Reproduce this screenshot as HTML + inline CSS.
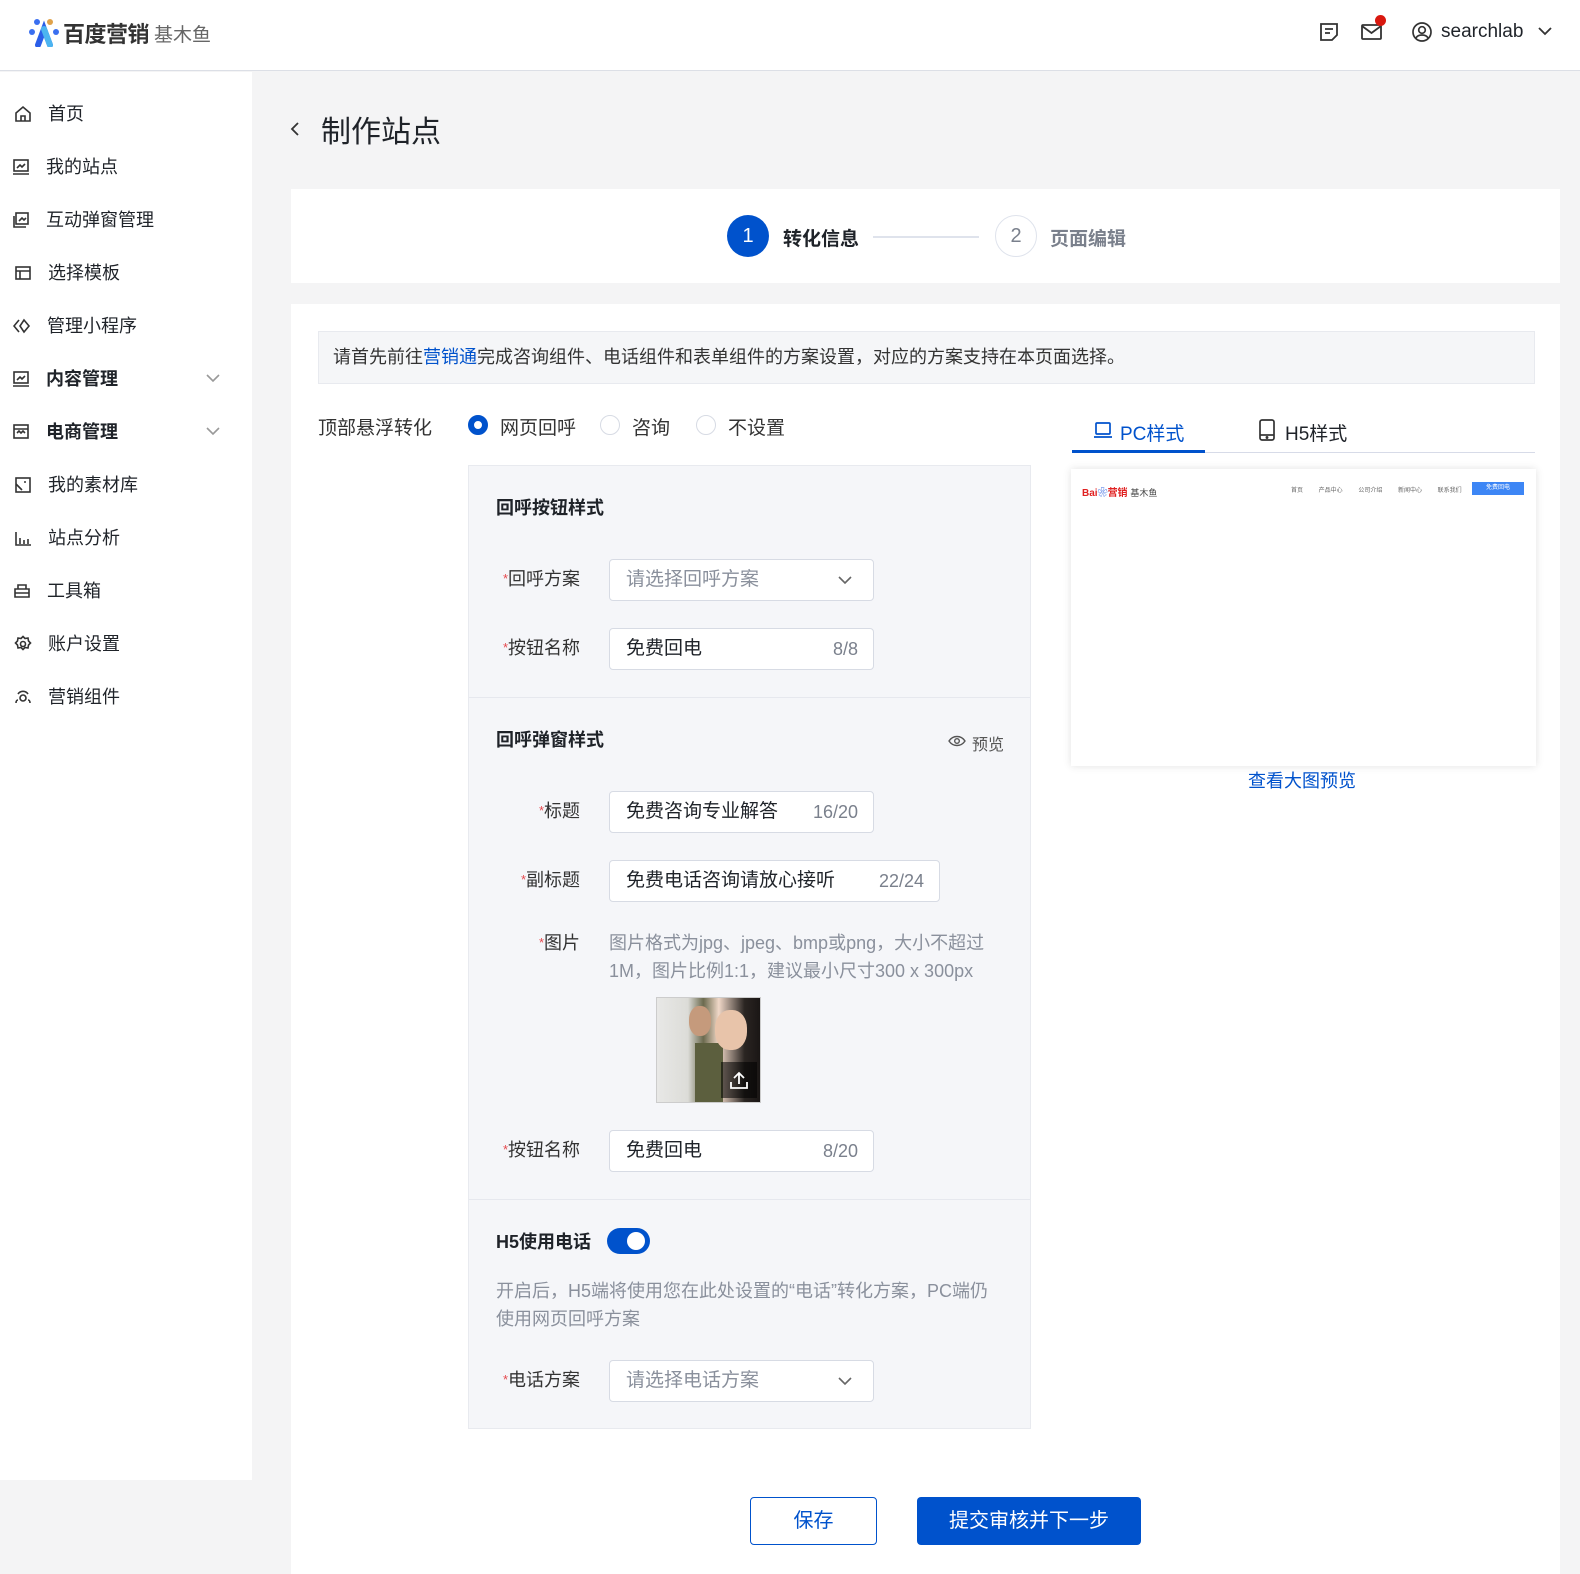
<!DOCTYPE html>
<html><head><meta charset="utf-8"><style>
*{margin:0;padding:0;box-sizing:border-box}
body{width:1580px;height:1570px;background:#f4f4f5;font-family:"Liberation Sans","Noto Sans CJK SC",sans-serif;color:#1f2329;position:relative;overflow:hidden}
.a{position:absolute}
.nav{font-size:18px;color:#1f2329;line-height:24px}
.nav svg{position:absolute;left:-34px;top:3px}
.lbl{font-size:18px;color:#333;line-height:24px;text-align:right}
.lbl i{color:#e5484d;font-style:normal;font-size:13px;vertical-align:top}
.inp{background:#fff;border:1px solid #d7dbe4;border-radius:4px;height:42px;font-size:19px;line-height:40px;padding:0 16px;color:#1f2329}
.inp .c{position:absolute;right:15px;top:0;color:#7a808c;font-size:18px}
.ph{color:#8a909c}
.h{font-size:18px;font-weight:bold;color:#1f2329}
</style></head><body>
<div class="a" style="left:0;top:0;width:1580px;height:71px;background:#fff;border-bottom:1px solid #dcdfe6"></div>
<svg class="a" style="left:28px;top:17px" width="32" height="30" viewBox="0 0 32 30">
<circle cx="9" cy="5" r="3" fill="#3a6ff0"/><circle cx="22" cy="5" r="3" fill="#e0a24a"/><circle cx="4" cy="15" r="3" fill="#3a6ff0"/><circle cx="28" cy="15" r="3" fill="#3a6ff0"/>
<path d="M10 28 L16 12 L22 28" stroke="#2b5ee8" stroke-width="6" fill="none" stroke-linecap="round"/>
<path d="M16 12 L22 28" stroke="#4cb4f0" stroke-width="6" stroke-linecap="round"/></svg>
<div class="a" style="left:63px;top:17px;font-size:22px;font-weight:bold;color:#333;letter-spacing:-0.5px">百度营销</div>
<div class="a" style="left:154px;top:20px;font-size:19px;color:#666">基木鱼</div>
<svg class="a" style="left:1318px;top:21px" width="22" height="22" viewBox="0 0 22 22" fill="none" stroke="#333" stroke-width="1.8"><path d="M3 3h16v11l-5 5H3z M7 8h8 M7 12h5"/></svg>
<svg class="a" style="left:1360px;top:22px" width="24" height="20" viewBox="0 0 24 20" fill="none" stroke="#333" stroke-width="1.8"><rect x="2" y="3" width="19" height="14" rx="1"/><path d="M2 4l9.5 7L21 4"/></svg>
<div class="a" style="left:1375px;top:15px;width:11px;height:11px;border-radius:50%;background:#d9180f"></div>
<svg class="a" style="left:1411px;top:21px" width="22" height="22" viewBox="0 0 22 22" fill="none" stroke="#333" stroke-width="1.7"><circle cx="11" cy="11" r="9"/><circle cx="11" cy="9" r="3.3"/><path d="M5 17c2-4 10-4 12 0"/></svg>
<div class="a" style="left:1441px;top:21px;font-size:19px;color:#1f2329">searchlab</div>
<svg class="a" style="left:1537px;top:25px" width="16" height="12" viewBox="0 0 16 12" fill="none" stroke="#333" stroke-width="1.8"><path d="M2 3l6 6 6-6"/></svg>
<div class="a" style="left:0;top:72px;width:252px;height:1408px;background:#fff"></div>
<div class="a nav" style="left:48px;top:102px"><svg width="18" height="18" viewBox="0 0 18 18" fill="none" stroke="#333" stroke-width="1.6"><path d="M2 8L9 2l7 6v8H2z M7 16v-5h4v5"/></svg>首页</div>
<div class="a nav" style="left:46px;top:155px"><svg width="18" height="18" viewBox="0 0 18 18" fill="none" stroke="#333" stroke-width="1.6"><rect x="2" y="2" width="14" height="11"/><path d="M1 16h16 M5 10l3-3 2 2 3-3"/></svg>我的站点</div>
<div class="a nav" style="left:46px;top:208px"><svg width="18" height="18" viewBox="0 0 18 18" fill="none" stroke="#333" stroke-width="1.6"><rect x="4" y="2" width="12" height="11"/><path d="M2 5v11h12 M7 10l3-3 2 2 2-2"/></svg>互动弹窗管理</div>
<div class="a nav" style="left:48px;top:261px"><svg width="18" height="18" viewBox="0 0 18 18" fill="none" stroke="#333" stroke-width="1.6"><rect x="2" y="3" width="14" height="12"/><path d="M2 7h14 M6 7v8"/></svg>选择模板</div>
<div class="a nav" style="left:47px;top:314px"><svg width="18" height="18" viewBox="0 0 18 18" fill="none" stroke="#333" stroke-width="1.6"><path d="M6 3L1 9l5 6 M11 3l5 6-5 6-4-6z"/></svg>管理小程序</div>
<div class="a nav" style="left:46px;top:367px;font-weight:bold"><svg width="18" height="18" viewBox="0 0 18 18" fill="none" stroke="#333" stroke-width="1.6"><rect x="2" y="2" width="14" height="11"/><path d="M1 16h16 M5 10l3-3 2 2 3-3"/></svg>内容管理</div>
<svg class="a" style="left:205px;top:372px" width="16" height="12" viewBox="0 0 16 12" fill="none" stroke="#999" stroke-width="1.6"><path d="M2 3l6 6 6-6"/></svg>
<div class="a nav" style="left:46px;top:420px;font-weight:bold"><svg width="18" height="18" viewBox="0 0 18 18" fill="none" stroke="#333" stroke-width="1.6"><rect x="2" y="2" width="14" height="13"/><path d="M2 6h14 M5 10l2-2 2 2 2-2 2 2"/></svg>电商管理</div>
<svg class="a" style="left:205px;top:425px" width="16" height="12" viewBox="0 0 16 12" fill="none" stroke="#999" stroke-width="1.6"><path d="M2 3l6 6 6-6"/></svg>
<div class="a nav" style="left:48px;top:473px"><svg width="18" height="18" viewBox="0 0 18 18" fill="none" stroke="#333" stroke-width="1.6"><rect x="2" y="2" width="14" height="14"/><path d="M2 8l6 6 M10 6h2"/></svg>我的素材库</div>
<div class="a nav" style="left:48px;top:526px"><svg width="18" height="18" viewBox="0 0 18 18" fill="none" stroke="#333" stroke-width="1.6"><path d="M2 3v13h15 M6 9v6 M10 11v4 M14 10v5"/></svg>站点分析</div>
<div class="a nav" style="left:47px;top:579px"><svg width="18" height="18" viewBox="0 0 18 18" fill="none" stroke="#333" stroke-width="1.6"><path d="M5 7V3h8v4 M2 7h14v8H2z M2 11h14"/></svg>工具箱</div>
<div class="a nav" style="left:48px;top:632px"><svg width="18" height="18" viewBox="0 0 18 18" fill="none" stroke="#333" stroke-width="1.6"><path d="M9 1.5l2 2 3-.5.5 3 2 2-2 2-.5 3-3-.5-2 2-2-2-3 .5-.5-3-2-2 2-2 .5-3 3 .5z"/><circle cx="9" cy="9" r="2.5"/></svg>账户设置</div>
<div class="a nav" style="left:48px;top:685px"><svg width="18" height="18" viewBox="0 0 18 18" fill="none" stroke="#333" stroke-width="1.6"><circle cx="9" cy="10" r="3"/><path d="M4 6a6 6 0 0 1 10 0 M2 15c0-2 1-3 2-3 M16 15c0-2-1-3-2-3"/></svg>营销组件</div>
<svg class="a" style="left:288px;top:120px" width="14" height="18" viewBox="0 0 14 18" fill="none" stroke="#333" stroke-width="1.8"><path d="M10 3L4 9l6 6"/></svg>
<div class="a" style="left:321px;top:107px;font-size:30px;color:#1f2329">制作站点</div>
<div class="a" style="left:291px;top:189px;width:1269px;height:94px;background:#fff"></div>
<div class="a" style="left:727px;top:215px;width:42px;height:42px;border-radius:50%;background:#0052cc;color:#fff;font-size:20px;text-align:center;line-height:42px">1</div>
<div class="a" style="left:783px;top:224px;font-size:19px;font-weight:bold;color:#1f2329">转化信息</div>
<div class="a" style="left:873px;top:236px;width:106px;height:2px;background:#dfe3ec"></div>
<div class="a" style="left:995px;top:215px;width:42px;height:42px;border-radius:50%;border:1px solid #dfe3ec;color:#7a808c;font-size:20px;text-align:center;line-height:40px">2</div>
<div class="a" style="left:1050px;top:224px;font-size:19px;font-weight:bold;color:#7a808c">页面编辑</div>
<div class="a" style="left:291px;top:304px;width:1269px;height:1270px;background:#fff"></div>
<div class="a" style="left:318px;top:331px;width:1217px;height:53px;background:#f5f6f8;border:1px solid #e8eaef;font-size:18px;line-height:51px;padding-left:14px;color:#333">请首先前往<span style="color:#0052cc">营销通</span>完成咨询组件、电话组件和表单组件的方案设置，对应的方案支持在本页面选择。</div>
<div class="a" style="left:318px;top:413px;font-size:19px;color:#333">顶部悬浮转化</div>
<div class="a" style="left:468px;top:415px;width:20px;height:20px;border-radius:50%;border:6px solid #0052cc;background:#fff"></div>
<div class="a" style="left:500px;top:413px;font-size:19px;color:#333">网页回呼</div>
<div class="a" style="left:600px;top:415px;width:20px;height:20px;border-radius:50%;border:1px solid #d7dbe4"></div>
<div class="a" style="left:632px;top:413px;font-size:19px;color:#333">咨询</div>
<div class="a" style="left:696px;top:415px;width:20px;height:20px;border-radius:50%;border:1px solid #d7dbe4"></div>
<div class="a" style="left:728px;top:413px;font-size:19px;color:#333">不设置</div>
<div class="a" style="left:468px;top:465px;width:563px;height:964px;background:#f5f6f9;border:1px solid #e8eaef"></div>
<div class="a" style="left:469px;top:697px;width:561px;height:1px;background:#e6e8ee"></div>
<div class="a" style="left:469px;top:1199px;width:561px;height:1px;background:#e6e8ee"></div>
<div class="a h" style="left:496px;top:494px">回呼按钮样式</div>
<div class="a lbl" style="left:480px;top:567px;width:100px"><i>*</i>回呼方案</div>
<div class="a inp" style="left:609px;top:559px;width:265px"><span class="ph">请选择回呼方案</span><svg class="a" style="right:20px;top:14px" width="16" height="12" viewBox="0 0 16 12" fill="none" stroke="#666" stroke-width="1.6"><path d="M2 3l6 6 6-6"/></svg></div>
<div class="a lbl" style="left:480px;top:636px;width:100px"><i>*</i>按钮名称</div>
<div class="a inp" style="left:609px;top:628px;width:265px">免费回电<span class="c">8/8</span></div>
<div class="a h" style="left:496px;top:726px">回呼弹窗样式</div>
<svg class="a" style="left:948px;top:734px" width="18" height="14" viewBox="0 0 18 14" fill="none" stroke="#555" stroke-width="1.4"><path d="M1 7c4-6 12-6 16 0-4 6-12 6-16 0z"/><circle cx="9" cy="7" r="2.3"/></svg>
<div class="a" style="left:972px;top:731px;font-size:16px;color:#555">预览</div>
<div class="a lbl" style="left:480px;top:799px;width:100px"><i>*</i>标题</div>
<div class="a inp" style="left:609px;top:791px;width:265px">免费咨询专业解答<span class="c">16/20</span></div>
<div class="a lbl" style="left:480px;top:868px;width:100px"><i>*</i>副标题</div>
<div class="a inp" style="left:609px;top:860px;width:331px">免费电话咨询请放心接听<span class="c">22/24</span></div>
<div class="a lbl" style="left:480px;top:931px;width:100px"><i>*</i>图片</div>
<div class="a" style="left:609px;top:929px;width:395px;font-size:18px;line-height:28px;color:#8a909c">图片格式为jpg、jpeg、bmp或png，大小不超过1M，图片比例1:1，建议最小尺寸300 x 300px</div>
<div class="a" style="left:656px;top:997px;width:105px;height:106px;background:linear-gradient(90deg,#e8e8e6 0%,#dcdcd8 30%,#6b6a4e 45%,#f0d8c8 60%,#2a2522 85%,#1a1615 100%);border:1px solid #ccc;overflow:hidden">
<div class="a" style="left:38px;top:45px;width:28px;height:61px;background:#5c5f3e"></div>
<div class="a" style="left:58px;top:12px;width:32px;height:40px;border-radius:45%;background:#e8c4aa"></div>
<div class="a" style="left:32px;top:8px;width:22px;height:30px;border-radius:45%;background:#c59a7c"></div>
<div class="a" style="left:64px;top:64px;width:36px;height:36px;background:rgba(0,0,0,.55)"></div>
<svg class="a" style="left:70px;top:70px" width="24" height="24" viewBox="0 0 24 24" fill="none" stroke="#fff" stroke-width="1.8"><path d="M4 14v6h16v-6 M12 16V5 M7 10l5-5 5 5"/></svg></div>
<div class="a lbl" style="left:480px;top:1138px;width:100px"><i>*</i>按钮名称</div>
<div class="a inp" style="left:609px;top:1130px;width:265px">免费回电<span class="c">8/20</span></div>
<div class="a h" style="left:496px;top:1228px">H5使用电话</div>
<div class="a" style="left:607px;top:1228px;width:43px;height:26px;border-radius:13px;background:#0052cc"><div class="a" style="left:20px;top:4px;width:18px;height:18px;border-radius:50%;background:#fff"></div></div>
<div class="a" style="left:496px;top:1277px;width:492px;font-size:18px;line-height:28px;color:#8a909c">开启后，H5端将使用您在此处设置的“电话”转化方案，PC端仍使用网页回呼方案</div>
<div class="a lbl" style="left:480px;top:1368px;width:100px"><i>*</i>电话方案</div>
<div class="a inp" style="left:609px;top:1360px;width:265px"><span class="ph">请选择电话方案</span><svg class="a" style="right:20px;top:14px" width="16" height="12" viewBox="0 0 16 12" fill="none" stroke="#666" stroke-width="1.6"><path d="M2 3l6 6 6-6"/></svg></div>
<svg class="a" style="left:1093px;top:420px" width="20" height="20" viewBox="0 0 20 20" fill="none" stroke="#0052cc" stroke-width="1.7"><rect x="3" y="3" width="14" height="11" rx="1"/><path d="M1 17h18"/></svg>
<div class="a" style="left:1120px;top:419px;font-size:19px;color:#0052cc">PC样式</div>
<svg class="a" style="left:1258px;top:419px" width="18" height="22" viewBox="0 0 18 22" fill="none" stroke="#333" stroke-width="1.7"><rect x="2" y="1" width="14" height="20" rx="2"/><path d="M2 16h14"/><circle cx="9" cy="18.5" r=".6" fill="#333"/></svg>
<div class="a" style="left:1285px;top:419px;font-size:19px;color:#1f2329">H5样式</div>
<div class="a" style="left:1072px;top:452px;width:463px;height:1px;background:#d7dbe8"></div>
<div class="a" style="left:1072px;top:450px;width:133px;height:3px;background:#0052cc"></div>
<div class="a" style="left:1071px;top:469px;width:465px;height:297px;background:#fff;box-shadow:0 0 8px rgba(0,0,0,.12)"></div>
<div class="a" style="left:1082px;top:484px;font-size:10px;font-weight:bold;color:#e02020">Bai<span style="color:#2a5ee0">❀</span>营销 <span style="color:#444;font-weight:normal;font-size:9px">基木鱼</span></div>
<div class="a" style="left:1291px;top:485px;font-size:6px;color:#666;word-spacing:14px">首页 产品中心 公司介绍 新闻中心 联系我们</div>
<div class="a" style="left:1472px;top:482px;width:52px;height:13px;background:#3d86f5;color:#fff;font-size:6px;line-height:13px;text-align:center">免费回电</div>
<div class="a" style="left:1248px;top:767px;font-size:18px;color:#0052cc">查看大图预览</div>
<div class="a" style="left:750px;top:1497px;width:127px;height:48px;border:1px solid #0052cc;border-radius:4px;color:#0052cc;font-size:20px;text-align:center;line-height:46px">保存</div>
<div class="a" style="left:917px;top:1497px;width:224px;height:48px;background:#0052cc;border-radius:4px;color:#fff;font-size:20px;text-align:center;line-height:48px">提交审核并下一步</div>
</body></html>
